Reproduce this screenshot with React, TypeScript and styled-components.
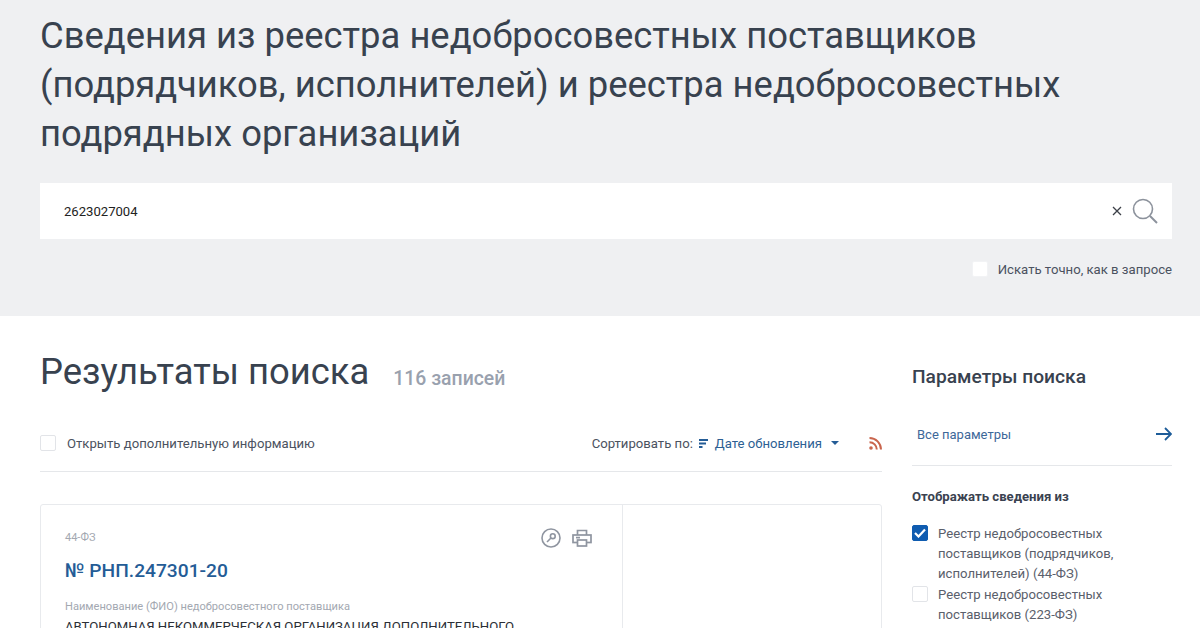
import styled, { createGlobalStyle } from 'styled-components';

const GlobalStyle = createGlobalStyle`
  html, body {
    margin: 0;
    padding: 0;
    height: 628px;
    overflow: hidden;
    background: #fff;
    font-family: Roboto, "Noto Sans", sans-serif;
  }
`;

const Hero = styled.header`
  height: 316px;
  box-sizing: border-box;
  padding: 11px 28px 0 40px;
  background: #eff0f2;
`;

const PageTitle = styled.h1`
  margin: 0;
  font-size: 36.4px;
  font-weight: 400;
  line-height: 49px;
  color: #38424f;
`;

const SearchBar = styled.div`
  display: flex;
  align-items: center;
  height: 56px;
  margin-top: 25px;
  padding: 0 13px 0 24px;
  background: #fff;
`;

const SearchText = styled.div`
  flex: 1;
  font-size: 13.1px;
  color: #222;
`;

const ExactRow = styled.label`
  display: flex;
  justify-content: flex-end;
  align-items: center;
  gap: 10px;
  margin-top: 22px;
  font-size: 13.15px;
  color: #4b5260;
`;

const Box = styled.span<{ $checked?: boolean; $onGrey?: boolean }>`
  display: flex;
  align-items: center;
  justify-content: center;
  flex: none;
  box-sizing: border-box;
  width: 16px;
  height: 16px;
  border-radius: 2px;
  background: ${({ $checked }) => ($checked ? '#0f5cb0' : '#fff')};
  border: 1px solid ${({ $checked, $onGrey }) => ($checked ? '#0f5cb0' : $onGrey ? '#f2f3f5' : '#e2e4e8')};
`;

const Content = styled.main`
  display: grid;
  grid-template-columns: 842px 260px;
  column-gap: 30px;
  padding: 0 28px 0 40px;
`;

const Results = styled.section`
  min-width: 0;
`;

const ResultsHead = styled.div`
  display: flex;
  align-items: flex-start;
  gap: 24px;
  padding-top: 31px;
`;

const ResultsTitle = styled.h2`
  margin: 0;
  font-size: 36.4px;
  font-weight: 400;
  line-height: 49px;
  color: #38424f;
`;

const Count = styled.span`
  margin-top: 20px;
  font-size: 19.4px;
  font-weight: 500;
  line-height: 23px;
  color: #99a1ae;
`;

const SortRow = styled.div`
  display: flex;
  align-items: center;
  height: 38px;
  margin-top: 28px;
  padding-bottom: 9px;
  border-bottom: 1px solid #e5e7ea;
  font-size: 13.15px;
  color: #4b5260;
`;

const OpenLabel = styled.span`
  margin-left: 11px;
  flex: 1;
`;

const SortLink = styled.span`
  display: flex;
  align-items: center;
  margin: 0 30px 0 6px;
  color: #2d5f93;
`;

const Card = styled.article`
  display: grid;
  grid-template-columns: 582px 1fr;
  height: 200px;
  margin-top: 32px;
  border: 1px solid #e8eaed;
  border-radius: 3px;
`;

const CardMain = styled.div`
  padding: 25px 30px 0 24px;
  border-right: 1px solid #e8eaed;
`;

const CardTop = styled.div`
  display: flex;
  justify-content: space-between;
  align-items: flex-start;
`;

const LawTag = styled.div`
  font-size: 11px;
  line-height: 16px;
  color: #a3a8b1;
`;

const IconRow = styled.div`
  display: flex;
  gap: 11px;
  margin-top: -2px;
`;

const RecordNumber = styled.a`
  display: block;
  margin-top: 10px;
  font-size: 19.2px;
  font-weight: 500;
  line-height: 26px;
  color: #245c96;
`;

const FieldLabel = styled.div`
  margin-top: 15px;
  font-size: 11.1px;
  line-height: 16px;
  color: #a3a8b1;
`;

const FieldValue = styled.div`
  margin-top: 3px;
  font-size: 13.15px;
  line-height: 18px;
  color: #2b2f36;
`;

const Sidebar = styled.aside`
  padding-top: 48px;
`;

const SideTitle = styled.h3`
  margin: 0;
  font-size: 19.2px;
  font-weight: 500;
  line-height: 26px;
  color: #38424f;
`;

const AllParams = styled.div`
  display: flex;
  justify-content: space-between;
  align-items: center;
  height: 62px;
  margin-top: 13px;
  padding-left: 5px;
  border-bottom: 1px solid #e5e7ea;
  font-size: 13px;
  color: #3d6899;
`;

const GroupTitle = styled.div`
  margin-top: 22px;
  font-size: 13.15px;
  font-weight: 700;
  line-height: 17px;
  color: #3a4250;
`;

const OptionList = styled.div`
  display: flex;
  flex-direction: column;
  margin-top: 18.6px;
`;

const Option = styled.label`
  display: flex;
  gap: 10px;
  font-size: 13.15px;
  line-height: 20.4px;
  color: #5a606b;
  padding-right: 50px;
  ${Box} {
    margin-top: 1px;
  }
`;

const ClearSvg = styled.svg`
  margin-right: 9px;
`;

const SortSvg = styled.svg`
  margin-right: 6px;
`;

const CaretSvg = styled.svg`
  margin-left: 9px;
`;

const SearchIcon = () => (
  <svg width="28" height="28" viewBox="0 0 28 28" fill="none" stroke="#8c929c" strokeWidth="1.6">
    <circle cx="12" cy="12" r="9.5" />
    <path d="M19 19l7 7" strokeWidth="2" />
  </svg>
);

const ClearIcon = () => (
  <ClearSvg width="10" height="10" viewBox="0 0 10 10" stroke="#3c4048" strokeWidth="1.3">
    <path d="M1 1l8 8M9 1l-8 8" />
  </ClearSvg>
);

const CheckMark = () => (
  <svg width="12" height="10" viewBox="0 0 12 10" fill="none" stroke="#fff" strokeWidth="2.2">
    <path d="M1 5l3.5 3.5L11 1.5" />
  </svg>
);

const SortIcon = () => (
  <SortSvg width="10" height="9" viewBox="0 0 10 9" fill="#245c96">
    <rect x="0" y="0" width="9" height="2" />
    <rect x="0" y="3.5" width="7" height="2" />
    <rect x="0" y="7" width="3.5" height="2" />
  </SortSvg>
);

const Caret = () => (
  <CaretSvg width="8" height="4" viewBox="0 0 8 4" fill="#245c96">
    <path d="M0 0h8L4 4z" />
  </CaretSvg>
);

const RssIcon = () => (
  <svg width="13" height="13" viewBox="0 0 13 13" fill="none" stroke="#c9654d" strokeWidth="2">
    <circle cx="2" cy="11" r="1.8" fill="#c9654d" stroke="none" />
    <path d="M0.5 5.2a7.3 7.3 0 0 1 7.3 7.3" />
    <path d="M0.5 1a11.5 11.5 0 0 1 11.5 11.5" />
  </svg>
);

const KeyIcon = () => (
  <svg width="20" height="20" viewBox="0 0 20 20" fill="none" stroke="#8f95a0" strokeWidth="1.6">
    <circle cx="10" cy="10" r="9" />
    <circle cx="11.8" cy="8.2" r="2.4" />
    <path d="M10.2 9.8L6 14" />
  </svg>
);

const PrintIcon = () => (
  <svg width="20" height="20" viewBox="0 0 20 20" fill="none" stroke="#8f95a0" strokeWidth="1.7">
    <path d="M5.5 7V2.5h9V7" />
    <rect x="1" y="7" width="18" height="7.5" />
    <rect x="5.5" y="12" width="9" height="6" fill="#fff" />
    <path d="M4 9.6h4" />
  </svg>
);

const ArrowIcon = () => (
  <svg width="16" height="14" viewBox="0 0 16 14" fill="none" stroke="#1d5c99" strokeWidth="1.8">
    <path d="M0 7h15M9 1l6 6-6 6" />
  </svg>
);

export default function App() {
  return (
    <>
      <GlobalStyle />
      <Hero>
        <PageTitle>
          Сведения из реестра недобросовестных поставщиков (подрядчиков, исполнителей) и реестра недобросовестных
          подрядных организаций
        </PageTitle>
        <SearchBar>
          <SearchText>2623027004</SearchText>
          <ClearIcon />
          <SearchIcon />
        </SearchBar>
        <ExactRow>
          <Box $onGrey />
          Искать точно, как в запросе
        </ExactRow>
      </Hero>
      <Content>
        <Results>
          <ResultsHead>
            <ResultsTitle>Результаты поиска</ResultsTitle>
            <Count>116 записей</Count>
          </ResultsHead>
          <SortRow>
            <Box />
            <OpenLabel>Открыть дополнительную информацию</OpenLabel>
            Сортировать по:
            <SortLink>
              <SortIcon />
              Дате обновления
              <Caret />
            </SortLink>
            <RssIcon />
          </SortRow>
          <Card>
            <CardMain>
              <CardTop>
                <LawTag>44-ФЗ</LawTag>
                <IconRow>
                  <KeyIcon />
                  <PrintIcon />
                </IconRow>
              </CardTop>
              <RecordNumber>№ РНП.247301-20</RecordNumber>
              <FieldLabel>Наименование (ФИО) недобросовестного поставщика</FieldLabel>
              <FieldValue>АВТОНОМНАЯ НЕКОММЕРЧЕСКАЯ ОРГАНИЗАЦИЯ ДОПОЛНИТЕЛЬНОГО</FieldValue>
            </CardMain>
            <div />
          </Card>
        </Results>
        <Sidebar>
          <SideTitle>Параметры поиска</SideTitle>
          <AllParams>
            Все параметры
            <ArrowIcon />
          </AllParams>
          <GroupTitle>Отображать сведения из</GroupTitle>
          <OptionList>
            <Option>
              <Box $checked>
                <CheckMark />
              </Box>
              <span>Реестр недобросовестных поставщиков (подрядчиков, исполнителей) (44-ФЗ)</span>
            </Option>
            <Option>
              <Box />
              <span>Реестр недобросовестных поставщиков (223-ФЗ)</span>
            </Option>
          </OptionList>
        </Sidebar>
      </Content>
    </>
  );
}
